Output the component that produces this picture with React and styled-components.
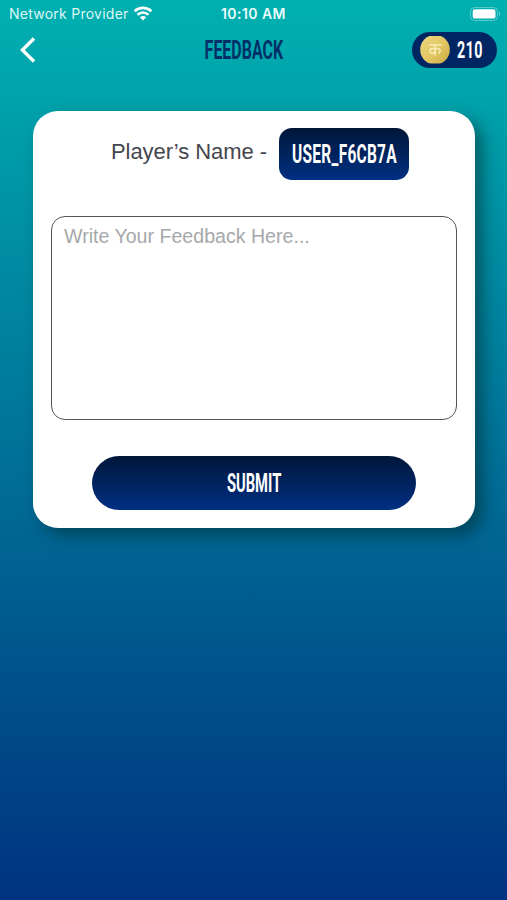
import React from "react";
import styled, { createGlobalStyle } from "styled-components";

const App = () => {
  return (
    <>
      <GlobalStyle />
      <StScreen>
        <StStatusBar>
          <StCarrier>
            <StStatusText>Network Provider</StStatusText>
            <WifiIcon />
          </StCarrier>
          <StClock>10:10 AM</StClock>
          <BatteryIcon />
        </StStatusBar>
        <StHeader>
          <StBackBtn aria-label="Back">
            <svg width="16" height="26" viewBox="0 0 16 26" fill="none">
              <path d="M14 1.5 2.4 13 14 24.5" stroke="#fff" strokeWidth="3.4" />
            </svg>
          </StBackBtn>
          <StTitle>
            <StCondensed $size={26} $scale={0.615}>FEEDBACK</StCondensed>
          </StTitle>
          <StCoins>
            <CoinIcon />
            <StCoinCount>
              <StCondensed $size={23} $scale={0.62} $spacing={0.8}>210</StCondensed>
            </StCoinCount>
          </StCoins>
        </StHeader>
        <StCard>
          <StPlayer>
            <StLabel>Player’s Name -</StLabel>
            <StUserName>
              <StCondensed $size={25} $scale={0.62} $spacing={0.4}>USER_F6CB7A</StCondensed>
            </StUserName>
          </StPlayer>
          <StFeedback placeholder="Write Your Feedback Here..." />
          <StSubmitBtn>
            <StCondensed $size={25} $scale={0.59}>SUBMIT</StCondensed>
          </StSubmitBtn>
        </StCard>
      </StScreen>
    </>
  );
};

const WifiIcon = () => (
  <svg width="20" height="15" viewBox="0 0 20 15" fill="none" stroke="#fff" strokeWidth="2.6">
    <path d="M1.6 5.2a12.2 12.2 0 0 1 16.8 0" />
    <path d="M4.6 8.7a7.8 7.8 0 0 1 10.8 0" />
    <path d="M10 14.4 6.9 11.3a4.4 4.4 0 0 1 6.2 0z" fill="#fff" stroke="none" />
  </svg>
);

const BatteryIcon = () => (
  <svg width="31" height="14" viewBox="0 0 31 14">
    <rect x="0.5" y="0.5" width="27" height="13" rx="4" fill="none" stroke="#fff" strokeOpacity="0.35" />
    <rect x="2.7" y="2.2" width="22.8" height="9.4" rx="2.2" fill="#fff" />
    <path d="M29 4.8c1.5.6 1.5 3.8 0 4.4z" fill="#fff" fillOpacity="0.45" />
  </svg>
);

const CoinIcon = () => (
  <svg width="30" height="28" viewBox="0 0 30 28">
    <defs>
      <linearGradient id="gold" x1="0" y1="0" x2="1" y2="1">
        <stop offset="0" stopColor="#ecd67f" />
        <stop offset="0.5" stopColor="#e2c864" />
        <stop offset="1" stopColor="#cdab45" />
      </linearGradient>
      <clipPath id="coin">
        <rect width="30" height="27.4" />
      </clipPath>
    </defs>
    <circle cx="15" cy="13.7" r="14.8" fill="url(#gold)" clipPath="url(#coin)" />
    <g fill="none" stroke="#f8edbb" strokeWidth="1.5">
      <path d="M9 8.9h12.4M15.2 8.9v10.6M15.2 12.4h-2.9a2.4 2.4 0 0 0 0 4.8c1.4 0 2.1-.6 2.9-1.3M15.2 13.4c1.8-1.4 5-1.4 5 1.2 0 1.6-.8 2.4-1.8 2.8" />
    </g>
  </svg>
);

const GlobalStyle = createGlobalStyle`
  * {
    box-sizing: border-box;
  }
  body {
    margin: 0;
  }
  button {
    border: 0;
    padding: 0;
    color: inherit;
    background: none;
    cursor: pointer;
  }
`;

const StScreen = styled.div`
  width: 100%;
  height: 100vh;
  overflow: hidden;
  color: #fff;
  font-family: "Liberation Sans", Arial, sans-serif;
  background: linear-gradient(180deg, #00b0b0 0%, #003380 100%);
`;

const StStatusBar = styled.div`
  display: grid;
  grid-template-columns: 1fr auto 1fr;
  align-items: center;
  height: 27px;
  padding: 0 6px 0 9px;
  font-family: Inter, sans-serif;
  > svg {
    justify-self: end;
  }
`;

const StCarrier = styled.div`
  display: flex;
  align-items: center;
  gap: 5px;
`;

const StStatusText = styled.span`
  width: 119px;
  color: #dcf7f6;
  font-size: 14px;
  letter-spacing: 0.25px;
  white-space: nowrap;
`;

const StClock = styled.span`
  color: #e8fbfa;
  margin-right: 3px;
  font-size: 14px;
  font-weight: 600;
  letter-spacing: 0.45px;
`;

const StHeader = styled.header`
  display: flex;
  align-items: center;
  height: 46px;
  padding: 0 10px 0 20px;
`;

const StBackBtn = styled.button`
  display: flex;
`;

const StTitle = styled.h1`
  display: flex;
  justify-content: center;
  width: 80px;
  margin: 0 0 0 168px;
  color: #003068;
`;

const StCondensed = styled.span`
  flex: none;
  font-family: Roboto, sans-serif;
  font-size: ${({ $size }) => $size}px;
  font-weight: 700;
  line-height: 1;
  letter-spacing: ${({ $spacing }) => $spacing || 0}px;
  white-space: nowrap;
  transform: scaleX(${({ $scale }) => $scale});
`;

const StCoins = styled.div`
  display: flex;
  align-items: center;
  width: 85px;
  height: 36px;
  margin-left: auto;
  padding-left: 8px;
  border-radius: 18px;
  background: #002563;
`;

const StCoinCount = styled.div`
  display: flex;
  justify-content: center;
  width: 39px;
`;

const StCard = styled.main`
  display: flex;
  flex-direction: column;
  align-items: center;
  width: 442px;
  height: 417px;
  margin: 38px 0 0 33px;
  padding: 17px 18px 18px;
  border-radius: 25px;
  background: #fff;
  box-shadow: 8px 8px 16px rgba(0, 45, 50, 0.55);
`;

const StPlayer = styled.div`
  display: flex;
  justify-content: center;
  gap: 12px;
  width: 100%;
  padding-left: 12px;
`;

const StLabel = styled.span`
  padding-top: 11px;
  color: #45464e;
  font-size: 22px;
  line-height: 26px;
  letter-spacing: -0.06px;
`;

const StUserName = styled.div`
  display: flex;
  align-items: center;
  justify-content: center;
  width: 130px;
  height: 52px;
  border-radius: 13px;
  background: linear-gradient(180deg, #001638 0%, #003084 100%);
`;

const StFeedback = styled.textarea`
  width: 406px;
  height: 205px;
  margin: 36px 0;
  padding: 7px 12px;
  border: 1px solid #555;
  border-radius: 14px;
  outline: none;
  resize: none;
  font-family: inherit;
  font-size: 19.6px;
  line-height: 24px;
  &::placeholder {
    color: #a5a8aa;
    opacity: 1;
  }
`;

const StSubmitBtn = styled.button`
  display: flex;
  align-items: center;
  justify-content: center;
  width: 324px;
  height: 54px;
  flex: none;
  border-radius: 27px;
  background: linear-gradient(180deg, #001638 0%, #003084 100%);
`;

export default App;
